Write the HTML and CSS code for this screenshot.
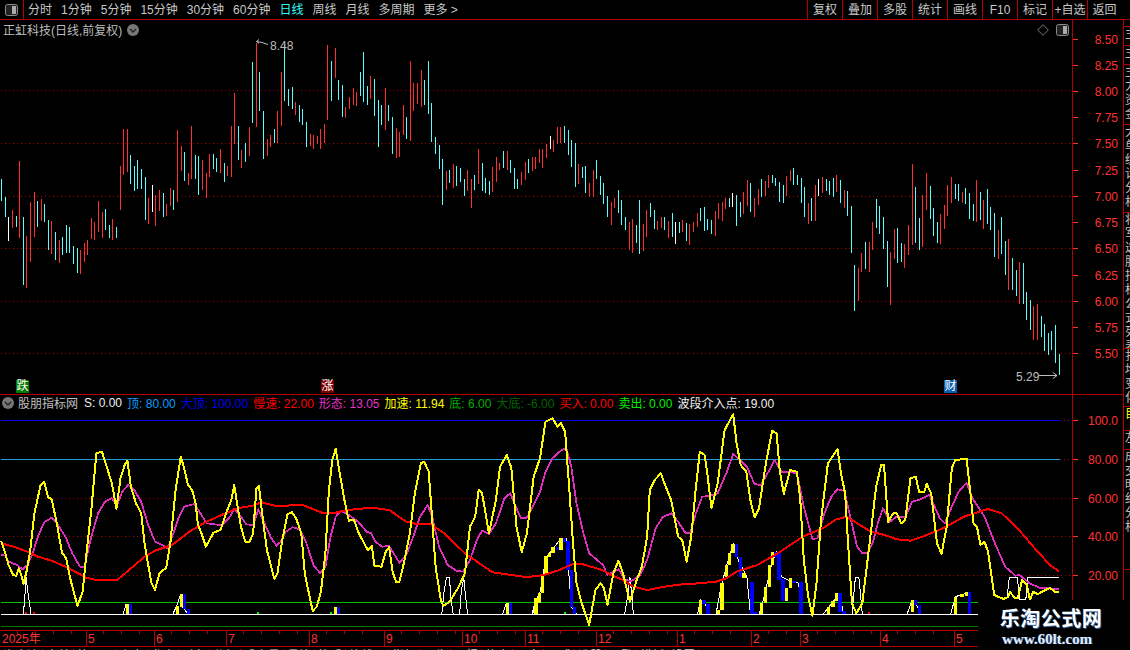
FILE: index.html
```html
<!DOCTYPE html>
<html lang="zh-CN">
<head>
    <meta charset="UTF-8">
    <title>正虹科技 日线</title>
    <link rel="stylesheet" href="styles.css">
</head>
<body>
    <div class="toolbar">
        <div class="panel-btn">
            <svg width="13" height="12" viewBox="0 0 13 12"><rect x="0.5" y="0.5" width="12" height="11" rx="2" fill="#222" stroke="#8a8a8a"/><rect x="7" y="2" width="4" height="8" fill="#aaa"/></svg>
        </div>
        <div class="periods">
            <span>分时</span><span>1分钟</span><span>5分钟</span><span>15分钟</span><span>30分钟</span><span>60分钟</span>
            <span class="active">日线</span><span>周线</span><span>月线</span><span>多周期</span><span>更多 &gt;</span>
        </div>
        <div class="actions">
            <span>复权</span><span>叠加</span><span>多股</span><span>统计</span><span>画线</span><span>F10</span><span>标记</span><span>+自选</span><span class="last">返回</span>
        </div>
    </div>

    <div class="main">
        <div class="charts">
            <div class="pane price-pane">
                <div class="plot">
                    <svg id="price-plot" class="plot-svg" viewBox="0 20 1072 374"></svg>
                    <div class="chart-title">
                        <span>正虹科技(日线,前复权)</span>
                        <svg class="chevron" width="12" height="12" viewBox="0 0 12 12"><circle cx="6" cy="6" r="6" fill="#777"/><polyline points="3,5 6,8 9,5" fill="none" stroke="#222" stroke-width="1.4"/></svg>
                    </div>
                    <div class="chart-tools">
                        <svg width="12" height="12" viewBox="0 0 12 12"><polygon points="6,0.7 11.3,6 6,11.3 0.7,6" fill="none" stroke="#777"/></svg>
                        <svg width="13" height="12" viewBox="0 0 13 12"><rect x="0.5" y="0.5" width="12" height="11" rx="2" fill="#222" stroke="#8a8a8a"/><rect x="7" y="2" width="4" height="8" fill="#aaa"/></svg>
                    </div>
                    <span class="flag flag-down">跌</span>
                    <span class="flag flag-up">涨</span>
                    <span class="flag flag-news">财</span>
                </div>
                <svg id="price-axis" class="axis-svg" viewBox="1073 20 50 374"></svg>
            </div>

            <div class="pane ind-pane">
                <div class="plot">
                    <svg id="ind-plot" class="plot-svg" viewBox="0 395 1072 235"></svg>
                    <div class="legend">
                        <svg class="chevron" width="12" height="12" viewBox="0 0 12 12"><circle cx="6" cy="6" r="6" fill="#777"/><polyline points="3,5 6,8 9,5" fill="none" stroke="#222" stroke-width="1.4"/></svg>
                        <span class="lg-name">股朋指标网</span>
                        <span class="lg-white">S: 0.00</span>
                        <span class="lg-top">顶: 80.00</span>
                        <span class="lg-bigtop">大顶: 100.00</span>
                        <span class="lg-red">慢速: 22.00</span>
                        <span class="lg-shape">形态: 13.05</span>
                        <span class="lg-yellow">加速: 11.94</span>
                        <span class="lg-bottom">底: 6.00</span>
                        <span class="lg-bigbottom">大底: -6.00</span>
                        <span class="lg-red">买入: 0.00</span>
                        <span class="lg-sell">卖出: 0.00</span>
                        <span class="lg-white">波段介入点: 19.00</span>
                    </div>
                </div>
                <svg id="ind-axis" class="axis-svg" viewBox="1073 395 50 235"></svg>
            </div>

            <svg id="date-axis" class="date-axis" viewBox="0 631 1123 15"></svg>

            <div class="tabs">
                <span>资金流</span><span>大单</span><span>筹码图</span><span>主力</span><span>龙虎</span><span>财务</span><span>分红</span><span>成交量</span><span>量比</span><span>换手</span><span>均线图</span><span>指标</span><span>公告</span><span>研报</span><span>热点</span><span>更多</span><span>公式</span><span>选股</span><span>预警</span><span>模板</span><span>设置</span>
            </div>
        </div>

        <div class="side">
            <div class="side-tab tab-a"></div>
            <div class="side-tab tab-b">主</div>
            <div class="side-tab tab-b">主</div>
            <div class="side-tab tab-c">主力资金</div>
            <div class="side-tab tab-d">大单统计分析</div>
            <div class="side-tab tab-e">将军选股指标公式列表</div>
            <div class="side-tab tab-f">扎堆变化</div>
            <div class="side-tab tab-g">目</div>
            <div class="side-tab tab-b">左</div>
            <div class="side-tab tab-h">成交明细分析</div>
        </div>
    </div>

    <div class="watermark">
        <div class="wm-title">乐淘公式网</div>
        <div class="wm-url">www.60lt.com</div>
    </div>

    <script src="chart.js"></script>
</body>
</html>
```

FILE: styles.css
```css
html, body {
    margin: 0;
    padding: 0;
    height: 650px;
    overflow: hidden;
    background: #000;
}
body {
    font-family: "Liberation Sans", "Noto Sans CJK SC", sans-serif;
    font-size: 12px;
    color: #c8c8c8;
    position: relative;
}
.toolbar {
    display: flex;
    height: 19px;
    line-height: 20px;
    border-bottom: 1px solid #b40000;
}
.panel-btn {
    width: 23px;
    display: flex;
    align-items: center;
    justify-content: center;
    border-right: 1px solid #b40000;
    box-sizing: content-box;
}
.periods {
    display: flex;
    gap: 9px;
    margin-left: 4px;
}
.periods .active {
    color: #33ffff;
}
.actions {
    display: flex;
    margin-left: auto;
    width: 323px;
}
.actions span {
    width: 35px;
    text-align: center;
    border-left: 1px solid #b40000;
    box-sizing: border-box;
    white-space: nowrap;
}
.actions .last {
    width: 37px;
    padding-right: 3px;
}
.main {
    display: flex;
    height: 630px;
}
.charts {
    width: 1123px;
    display: flex;
    flex-direction: column;
}
.pane {
    display: flex;
}
.price-pane {
    height: 374px;
    border-bottom: 1px solid #b40000;
}
.ind-pane {
    height: 235px;
    border-bottom: 1px solid #b40000;
}
.plot {
    position: relative;
    width: 1072px;
    border-right: 1px solid #b40000;
}
.plot-svg {
    display: block;
    width: 1072px;
    height: 100%;
}
.axis-svg {
    display: block;
    width: 50px;
    height: 100%;
}
.chart-title {
    position: absolute;
    left: 3px;
    top: 1px;
    display: flex;
    align-items: center;
    gap: 5px;
    color: #bcbcbc;
}
.chart-tools {
    position: absolute;
    right: 3px;
    top: 4px;
    display: flex;
    gap: 7px;
}
.flag {
    position: absolute;
    top: 360px;
    width: 13px;
    height: 13px;
    line-height: 13px;
    text-align: center;
    color: #fff;
    font-size: 12px;
}
.flag-down {
    left: 16px;
    background: #007a00;
}
.flag-up {
    left: 321px;
    background: #7a0000;
}
.flag-news {
    left: 944px;
    background: #0a5cb0;
}
.legend {
    position: absolute;
    left: 2px;
    top: -1px;
    display: flex;
    align-items: center;
    gap: 5px;
    height: 17px;
    white-space: nowrap;
}
.legend .chevron {
    margin-right: -1px;
}
.lg-name {
    color: #c0c0c0;
    margin-right: 1px;
}
.lg-white { color: #f0f0f0; }
.lg-top { color: #0a9fff; }
.lg-bigtop { color: #0000f0; }
.lg-red { color: #ff0000; }
.lg-shape { color: #e633cc; }
.lg-yellow { color: #ffff00; }
.lg-bottom { color: #00b000; }
.lg-bigbottom { color: #006400; }
.lg-sell { color: #00f000; }
.date-axis {
    display: block;
    width: 1123px;
    height: 15px;
    border-bottom: 1px solid #b40000;
    flex: none;
}
.tabs {
    display: flex;
    height: 14px;
    line-height: 14px;
    padding-top: 2px;
    flex: none;
    white-space: nowrap;
}
.tabs span {
    padding: 0 3px;
    border-right: 1px solid #b40000;
    color: #d0d0d0;
}
.side {
    width: 7px;
    overflow: hidden;
    border-left: 1px solid #b40000;
    display: flex;
    flex-direction: column;
}
.side-tab {
    width: 12px;
    flex: none;
    padding-left: 1px;
    line-height: 14px;
    color: #c0c0c0;
    word-break: break-all;
    border-bottom: 1px solid #b40000;
    box-sizing: border-box;
    overflow: hidden;
}
.tab-a { height: 7px; }
.tab-b { height: 19px; }
.tab-c { height: 60px; }
.tab-d { height: 88px; }
.tab-e { height: 136px; }
.tab-f { height: 58px; }
.tab-g { height: 24px; color: #ffff00; }
.tab-h { height: 120px; }
.watermark {
    position: absolute;
    left: 978px;
    top: 600px;
    width: 152px;
    height: 50px;
    background: #000;
    text-align: center;
    box-sizing: border-box;
    padding: 7px 6px 0 0;
}
.wm-title {
    font-size: 20px;
    font-weight: bold;
    line-height: 24px;
    letter-spacing: 0.5px;
    color: #fff;
    text-shadow: 1px 1px 0 #2a5fa0;
}
.wm-url {
    font-family: "Liberation Serif", serif;
    font-size: 15px;
    font-weight: bold;
    line-height: 16px;
    padding-right: 8px;
    color: #e4ecf8;
    text-shadow: 1px 0 0 #2a5fa0;
}
```

FILE: chart.js
```js
const NS = "http://www.w3.org/2000/svg";
const RED = "#ff2e2e";
const AXIS_RED = "#b40000";

function add(parent, name, attrs, text) {
    const el = document.createElementNS(NS, name);
    for (const k in attrs) el.setAttribute(k, attrs[k]);
    if (text !== undefined) el.textContent = text;
    parent.appendChild(el);
    return el;
}

function hline(svg, y, x1, x2, color) {
    add(svg, "rect", { x: x1, y: y, width: x2 - x1, height: 1, fill: color });
}

function dotted(svg, y, x1, x2) {
    add(svg, "line", {
        x1: x1, x2: x2, y1: y + 0.5, y2: y + 0.5,
        stroke: "#a00000", "stroke-width": 1, "stroke-dasharray": "1 3"
    });
}

// K线数据: 截图放大3倍后读出的 上-下 + 颜色, off 是纵向偏移
const BAR_CHUNKS = [
    { off: 120, bars: "177-245c 231-291c 291-363w 270-324r 288-321c 123-354r 291-495c 348-504r 246-426r 216-351r 243-321c 237-303r 252-306c 300-390c 303-402r 336-420c 360-429r 351-405c 315-399c 321-399c 378-432c 384-459c 390-462r 369-426r 360-405r 294-357r 306-360r 243-336r 276-354r 267-330c 315-354c 297-360r 321-354c 138-270r 27-165r 27-156r 105-192c 138-213c 120-207c 147-207c 171-300c 234-312r 195-276w 225-318r 210-273r 219-291c 252-288r 204-258r 210-270c 30-246r 78-153r 96-183c 159-195r 18-177r 105-177c 108-225c 120-210r 159-234r 102-171r 102-147c 114-156c 87-159r 129-186c 138-168r" },
    { off: 30, bars: "288-441r 189-342r 288-390c 360-414r 339-396c 291-378r 96-279c 39-291r 126-243c 243-387c 327-378r 315-351r 297-339c 243-339r 126-288r 42-213c 177-228c 171-237c 216-255r 225-276c 237-285c 276-351c 312-348r 315-357r 318-342r 297-357r 282-339r 45-270r 93-213c 54-144r 150-210c 165-261c 231-264r 201-237r 174-225r 186-228r 126-198c 66-216c 168-225c 138-207r 147-258c 210-351c 225-285c 174-300r 225-273c 261-372c 294-384r 306-381r 225-315r 261-327c 93-333r 159-243r 159-222r 120-231r 150-225c 93-252c 219-336c 321-372c 345-417c 387-525c 423-480r 420-459c 402-474r 408-468c 414-456c 447-498c 420-483r 447-534r 435-480c 357-462r 399-483c 444-489c 453-495c 411-486r 381-456r 399-420r 363-414c 363-420r 390-429c 414-477c 447-477c 426-465r 396-450r 387-429c 381-423r 381-417r 357-399r 357-414r 342-384r 318-357w 330-366r 291-342r 291-339r 288-339c 300-375c 330-411c 339-471c 402-462r 411-444c 408-489c 459-501r 420-501r 390-447c 438-495c 459-522c 498-561c 516-585r 504-534r 480-549c 510-585c 561-600c 576-660r" },
    { off: 150, bars: "207-309r 225-279c 150-312c 222-303r 180-261r 159-201c 180-237c 213-240r 201-234r 201-240c 213-264r 189-261c 216-282w 216-249c 210-246r 219-273c 222-285r 216-246r 189-231r 174-213c 171-243c 207-240c 210-252c 183-258r 159-207r 156-213r 144-177r 144-171c 129-171w 135-228c 156-201c 126-192r 90-168r 99-186c 144-201r 117-165r 87-141c 93-138r 75-114r 75-99c 84-108c 96-156c 105-159c 78-138r 60-93r 54-105c 75-105c 84-159c 111-201c 159-222r 144-213c 105-213r 87-138w 81-129r 87-123c 93-135c 84-141c 75-126r 90-159c 120-174r 123-198c 168-309c 345-483c 354-453r 309-366r 276-357c 276-366r 216-300r 147-234c 168-252c 201-297c 273-411c 306-465r 237-327r 234-339c 279-336c 282-354r 225-315r 42-285r 111-279c 204-300c 135-291r 69-180r 108-207c 174-258c 216-279c 192-282r 165-237r 105-198r 81-159r 102-147c 102-153c 126-159r 114-162c 129-207c 162-213c 90-216r 126-210c 150-237r 117-222c 171-240c 189-321c 240-327r 201-312c 273-375c 267-420r 324-420c 360-438c 336-462r 339-462c" },
    { off: 270, bars: "66-150c 90-180c 108-210r 102-210r 138-201c 162-243c 189-255c 183-240c 165-279c 252-315c" }
];

function drawPrice() {
    const svg = document.getElementById("price-plot");
    [90, 143, 196, 248, 301, 353].forEach(y => dotted(svg, y, 1, 1072));

    const paths = { r: "", c: "", w: "" };
    let i = 0;
    BAR_CHUNKS.forEach(chunk => {
        chunk.bars.split(" ").forEach(item => {
            const m = item.match(/(\d+)-(\d+)([rcw])/);
            const x = Math.floor(3.584 * i + 1.8) + 0.5;
            const top = Math.floor(m[1] / 3) + chunk.off;
            const bot = Math.floor(m[2] / 3) + chunk.off;
            paths[m[3]] += "M" + x + " " + top + "V" + bot;
            i++;
        });
    });
    const colors = { r: RED, c: "#55ffff", w: "#ffffff" };
    for (const k in paths) {
        add(svg, "path", { d: paths[k], stroke: colors[k], "stroke-width": 1, "shape-rendering": "crispEdges", fill: "none" });
    }

    // 最高最低价标注
    const label = { fill: "#bdbdbd", "font-size": 12 };
    add(svg, "text", Object.assign({ x: 270, y: 50 }, label), "8.48");
    add(svg, "path", { d: "M268 44.5L262 42.5L256.5 41.5M259 39.5L256.5 41.5L259 43.5", stroke: "#bdbdbd", fill: "none" });
    add(svg, "text", Object.assign({ x: 1016, y: 381 }, label), "5.29");
    add(svg, "path", { d: "M1039 375.5H1057M1053 372.5L1057 375.5L1053 378.5", stroke: "#bdbdbd", fill: "none" });
}

function drawAxis(id, items) {
    const svg = document.getElementById(id);
    items.forEach(it => {
        add(svg, "rect", { x: 1073, y: it[1], width: 5, height: 1, fill: RED });
        add(svg, "text", { x: 1118, y: it[1] + 5, "text-anchor": "end", fill: "#ff3333", "font-size": 12 }, it[0]);
    });
}

// 指标线: 放大图坐标 (横向2.904倍, 纵向3倍)
const YELLOW_A = "3,392 15,430 25,465 38,495 47,497 55,475 62,495 68,522 78,480 88,420 100,310 118,225 128,215 140,262 150,268 165,340 180,428 192,445 205,510 225,588 240,545 250,440 265,300 280,130 296,125 310,170 325,220 338,296 350,205 362,165 370,152 380,230 395,280 410,310 420,400 432,475 440,520 450,540 463,490 483,473 495,395 510,240 525,140 535,175 546,225 558,240 568,280 575,345 585,370 598,410 620,368 640,360 660,300 672,270 680,225 690,290 700,350 712,395 725,395 735,370 745,235 752,228 760,300 775,420 790,480 797,507 806,490 818,400 835,312 848,307 860,325 875,370 885,490 895,540 908,603 920,590 932,545 945,430 955,240 965,150 975,117 985,180 1000,270 1013,332 1028,330 1040,365 1060,405 1068,420 1080,407 1087,467 1108,470 1120,425 1130,412 1140,485 1150,515 1160,515 1175,450 1190,370 1205,250 1222,160 1232,155 1245,185 1253,300 1265,470 1280,570 1288,588 1305,575 1330,535 1350,490 1365,350 1380,320 1390,240 1400,250 1420,370 1440,270 1452,170 1472,135 1485,175 1500,350 1515,427 1530,370 1550,200";
const YELLOW_B = "29,145 45,35 65,25 80,50 90,40 102,65 115,250 125,400 135,520 150,580 172,645 190,540 205,520 215,535 225,585 242,490 257,452 270,490 290,575 310,510 325,470 340,380 348,240 362,210 380,190 392,225 410,270 430,380 442,390 455,455 468,380 480,250 493,125 507,135 515,190 527,295 545,220 565,60 590,13 600,100 612,165 628,185 640,270 652,322 665,295 685,160 703,62 716,70 725,180 737,252 755,180 775,185 785,270 795,450 808,560 820,618 832,520 845,330 865,160 893,118 903,190 915,250 925,420 935,580 948,610 965,580 985,410 1005,230 1020,165 1028,165 1040,335 1055,310 1065,310 1078,340 1090,330 1105,205 1120,200 1130,245 1145,245 1152,222 1165,250 1182,400 1195,432 1210,350 1225,175 1235,150 1268,146 1280,260 1288,340 1298,350 1308,405 1320,395 1330,425 1348,555 1375,567 1388,561 1394,546 1408,564 1417,564 1429,510 1443,525 1452,570 1461,546 1475,552 1496,540 1510,534 1525,546 1537,546";
const MAGENTA_A = "3,435 15,437 25,455 50,465 65,478 80,465 95,430 110,380 128,337 150,323 165,340 190,380 210,430 232,470 245,470 265,380 285,310 305,275 325,265 340,285 355,245 372,225 390,240 410,275 430,345 450,395 470,405 487,415 505,365 520,320 535,290 565,282 585,315 600,340 620,343 645,345 665,325 680,297 700,320 715,343 735,345 750,298 770,345 788,385 803,407 815,395 830,365 850,352 870,358 890,400 910,465 930,490 945,470 960,380 975,320 990,302 1005,310 1020,320 1040,335 1065,365 1078,370 1090,395 1110,410 1130,408 1160,458 1180,435 1200,380 1220,320 1242,285 1255,320 1275,410 1300,465 1325,482 1345,485 1365,450 1385,390 1400,362 1420,372 1440,340 1465,265 1482,250 1500,295 1513,325 1530,323 1550,285";
const MAGENTA_B = "29,245 45,185 65,145 85,125 105,113 120,170 135,280 155,370 172,430 195,450 212,465 225,495 258,478 275,510 295,513 320,495 340,450 365,355 385,322 410,310 430,335 452,370 465,370 480,315 500,260 520,258 545,250 570,190 590,132 610,150 630,170 652,222 670,225 690,190 710,150 730,185 750,185 775,190 795,290 820,387 835,385 855,310 875,260 893,238 913,243 930,320 950,410 965,430 980,430 995,400 1010,340 1025,295 1045,335 1065,320 1090,320 1110,275 1135,268 1160,255 1190,325 1205,340 1225,290 1245,245 1268,218 1285,265 1320,320 1350,400 1380,470 1410,497 1422,495 1450,520 1480,533 1537,537";
const RED_A = "3,400 40,410 80,425 110,440 150,452 200,475 250,503 280,510 340,510 375,480 420,440 450,422 500,405 550,365 600,335 650,312 690,295 730,288 760,277 800,288 880,285 935,308 975,308 1010,300 1080,293 1130,300 1180,335 1210,342 1250,342 1290,370 1350,430 1430,487 1480,494 1520,500";
const RED_B = "0,500 40,495 85,480 125,462 150,462 210,480 240,497 270,510 300,530 340,540 380,532 430,524 490,520 540,515 570,505 600,485 660,465 720,430 770,395 795,378 850,355 890,328 920,320 950,340 990,365 1030,375 1065,388 1105,392 1140,380 1200,355 1260,320 1330,297 1370,310 1420,360 1470,420 1510,465 1537,485";

const WHITE_A = ["68,612 72,560 76,500 80,540 85,575 90,612", "358,612 366,582", "502,612 512,590 522,560 530,590 545,612", "1283,612 1290,540 1297,502 1305,502 1310,570 1316,612", "1335,612 1340,540 1347,505 1352,560 1358,612", "1460,612 1470,580", "1545,612 1555,570"];
const WHITE_B = ["8,612 18,570 30,545 38,490 50,438 70,412 90,385 105,385 112,480 120,590 135,612", "275,612 285,550 290,500 297,570 300,612", "487,612 495,570 505,575 523,612", "540,612 555,530 570,470 590,402 605,450 630,500 640,612 660,612", "665,612 680,560 700,470 715,425 730,500 750,510 780,520 790,612", "852,612 880,575 900,550 910,612", "935,612 945,502 955,502 965,612", "1095,612 1110,570 1125,590 1135,612", "1222,612 1235,560 1275,547 1280,612 1295,612", "1385,567 1392,502 1415,502 1422,567 1440,567 1445,502 1537,502"];

// 柱子: x1-x2,y1-y2
const YELLOW_COLS_A = "366-375,582-612 510-520,588-612 523-532,552-590 970-979,591-612 1470-1478,579-612 1553-1562,565-612";
const BLUE_COLS_A = "375-384,582-612 532-540,552-597 542-551,597-612 979-988,591-612 1478-1487,579-612";
const YELLOW_COLS_B = "12-22,565-612 22-32,548-580 32-42,495-550 42-52,437-495 52-62,430-440 62-72,412-430 85-95,385-420 490-500,570-612 542-552,600-612 553-563,520-600 565-575,465-500 575-585,430-465 585-595,402-430 617-627,490-505 668-678,578-612 680-688,530-578 690-700,465-530 700-710,425-465 740-750,535-572 752-762,505-535 862-872,590-612 875-885,572-590 885-895,550-572 1105-1115,570-605 1230-1240,560-612 1250-1260,552-560 1262-1272,547-557";
const BLUE_COLS_B = "75-85,410-420 95-105,385-395 105-115,392-480 115-125,480-590 125-135,590-612 500-510,570-582 512-523,582-612 595-605,402-440 607-617,440-500 640-650,515-612 650-660,605-612 710-718,425-440 718-728,430-510 730-740,508-572 762-772,512-520 782-793,515-612 895-905,550-605 905-917,603-612 1115-1125,570-585 1127-1135,585-612 1272-1282,547-612";

function toPoints(str, off) {
    return str.split(" ").map(p => {
        const v = p.split(",");
        return (v[0] / 2.904 + off).toFixed(1) + "," + (v[1] / 3 + 410).toFixed(1);
    }).join(" ");
}

function curve(svg, strA, strB, color, width) {
    const pts = toPoints(strA, 0) + " " + toPoints(strB, 530);
    add(svg, "polyline", { points: pts, fill: "none", stroke: color, "stroke-width": width, "stroke-linejoin": "round", "shape-rendering": "crispEdges" });
}

function thin(svg, list, off) {
    list.forEach(s => {
        add(svg, "polyline", { points: toPoints(s, off), fill: "none", stroke: "#fff", "stroke-width": 1, "shape-rendering": "crispEdges" });
    });
}

function columns(svg, str, off, color) {
    str.split(" ").forEach(item => {
        const m = item.match(/(\d+)-(\d+),(\d+)-(\d+)/);
        const x1 = Math.round(m[1] / 2.904 + off);
        const x2 = Math.round(m[2] / 2.904 + off);
        const y1 = Math.round(m[3] / 3 + 410);
        const y2 = Math.round(m[4] / 3 + 410);
        add(svg, "rect", { x: x1, y: y1, width: x2 - x1, height: y2 - y1, fill: color });
    });
}

function drawIndicator() {
    const svg = document.getElementById("ind-plot");
    [498, 536, 575].forEach(y => dotted(svg, y, 1, 1072));
    hline(svg, 420, 1, 1060, "#0000e6");
    dotted(svg, 420, 1060, 1072);
    hline(svg, 459, 1, 1060, "#1f9fd6");
    dotted(svg, 459, 1060, 1072);
    hline(svg, 602, 1, 1072, "#00c000");
    hline(svg, 626, 1, 1072, "#007a00");

    thin(svg, WHITE_A, 0);
    thin(svg, WHITE_B, 530);
    columns(svg, YELLOW_COLS_A, 0, "#ffff00");
    columns(svg, YELLOW_COLS_B, 530, "#ffff00");
    columns(svg, BLUE_COLS_A, 0, "#0000ff");
    columns(svg, BLUE_COLS_B, 530, "#0000ff");
    hline(svg, 614, 1, 1072, "#ffffff");
    [[25, "#f00"], [33, "#f00"], [257, "#0f0"], [330, "#0f0"], [564, "#0f0"], [868, "#f00"]].forEach(d => {
        add(svg, "rect", { x: d[0], y: 612, width: 2, height: 2, fill: d[1] });
    });

    curve(svg, MAGENTA_A, MAGENTA_B, "#e02fc0", 1.8);
    curve(svg, RED_A, RED_B, "#ff0000", 2);
    curve(svg, YELLOW_A, YELLOW_B, "#ffff00", 2);
}

function drawDates() {
    const svg = document.getElementById("date-axis");
    const months = [[86, "5"], [154, "6"], [226, "7"], [309, "8"], [384, "9"], [462, "10"], [525, "11"], [596, "12"], [677, "1"], [751, "2"], [800, "3"], [880, "4"], [954, "5"]];
    add(svg, "text", { x: 2, y: 643, fill: "#ff3333", "font-size": 12 }, "2025年");
    let start = 0;
    months.forEach(m => {
        add(svg, "rect", { x: m[0], y: 631, width: 1, height: 15, fill: AXIS_RED });
        add(svg, "text", { x: m[0] + 2, y: 643, fill: "#ff3333", "font-size": 12 }, m[1]);
        for (let x = start + 17; x < m[0] - 6; x += 18) {
            add(svg, "rect", { x: x, y: 631, width: 1, height: 3, fill: AXIS_RED });
        }
        start = m[0];
    });
}

drawPrice();
const priceLabels = [];
for (let v = 8.5; v >= 5.5; v -= 0.25) {
    priceLabels.push([v.toFixed(2), Math.round(38.5 + (8.5 - v) * 104.9)]);
}
drawAxis("price-axis", priceLabels);
drawIndicator();
drawAxis("ind-axis", [["100.0", 420], ["80.00", 459], ["60.00", 498], ["40.00", 536], ["20.00", 575]]);
drawDates();
```
